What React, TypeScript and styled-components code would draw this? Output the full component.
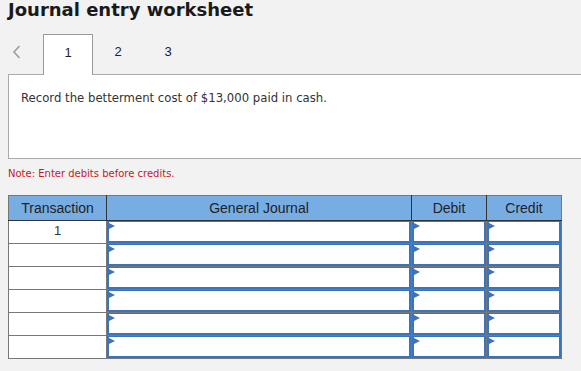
import styled, { createGlobalStyle } from "styled-components";

const GlobalStyle = createGlobalStyle`
  body {
    margin: 0;
    background: #f2f2f2;
    overflow: hidden;
  }
`;

const Page = styled.div`
  padding: 0 0 0 8px;
  font-family: "DejaVu Sans", Verdana, sans-serif;
  color: #222;
`;

const Title = styled.h1`
  margin: 0;
  font-size: 18px;
  line-height: 20px;
  font-weight: bold;
  color: #1a1a1a;
`;

const TabBar = styled.div`
  display: flex;
  align-items: flex-end;
  margin-top: 14px;
  height: 40px;
`;

const Prev = styled.div`
  width: 35px;
  height: 40px;
  display: flex;
  align-items: center;
  padding: 0 0 4px 4px;
  box-sizing: border-box;
  svg {
    display: block;
  }
`;

const Tab = styled.div<{ active?: boolean }>`
  width: 50px;
  height: ${(p) => (p.active ? "41px" : "40px")};
  margin-bottom: ${(p) => (p.active ? "-1px" : "0")};
  box-sizing: border-box;
  display: flex;
  align-items: center;
  justify-content: center;
  padding-bottom: 6px;
  font-family: "Liberation Sans", Arial, sans-serif;
  font-size: 13px;
  color: #222;
  background: ${(p) => (p.active ? "#fff" : "transparent")};
  border: ${(p) => (p.active ? "1px solid #999" : "1px solid transparent")};
  border-bottom: none;
  position: relative;
  z-index: 1;
`;

const Panel = styled.div`
  background: #fff;
  border: 1px solid #aaa;
  margin-right: -20px;
  height: 85px;
  box-sizing: border-box;
  padding: 15px 12px;
  font-size: 11.7px;
  line-height: 16px;
  color: #333;
`;

const Note = styled.div`
  margin-top: 7px;
  font-size: 10px;
  line-height: 15px;
  color: #c8191f;
`;

const Table = styled.table`
  margin-top: 14px;
  border-collapse: collapse;
  table-layout: fixed;
  font-family: "Liberation Sans", Arial, sans-serif;
  font-size: 13px;
`;

const Th = styled.th<{ w: number }>`
  width: ${(p) => p.w}px;
  height: 23px;
  padding: 0 0 1px;
  background: #78ade4;
  color: #222;
  font-weight: normal;
  font-size: 14px;
  text-align: center;
  border: 1px solid #333;
  border-top-color: #777;
  &:first-child {
    border-left-color: #777;
  }
  &:last-child {
    border-right-color: #777;
  }
`;

const Td = styled.td`
  height: 22px;
  padding: 0;
  border: 1px solid #777;
  background: #fff;
  text-align: center;
  color: #333;
  vertical-align: top;
  line-height: 20px;
`;

const InputCell = styled.td`
  height: 22px;
  padding: 0;
  border: 1px solid #777;
  background: #fff;
  vertical-align: top;
`;

const Field = styled.div`
  position: relative;
  height: 22px;
  box-sizing: border-box;
  border: 2px solid #3c73bd;
  border-top-width: 1px;
  background: #fff;
  &::before {
    content: "";
    position: absolute;
    left: 0;
    top: 1px;
    border-left: 6px solid #3c73bd;
    border-top: 3px solid transparent;
    border-bottom: 3px solid transparent;
  }
`;

const rows = ["1", "", "", "", "", ""];

export default function App() {
  return (
    <Page>
      <GlobalStyle />
      <Title>Journal entry worksheet</Title>
      <TabBar>
        <Prev>
          <svg width="9" height="14" viewBox="0 0 9 14">
            <path d="M7.5 1 L2 7 L7.5 13" fill="none" stroke="#9a9a9a" strokeWidth="1.5" />
          </svg>
        </Prev>
        <Tab active>1</Tab>
        <Tab>2</Tab>
        <Tab>3</Tab>
      </TabBar>
      <Panel>Record the betterment cost of $13,000 paid in cash.</Panel>
      <Note>Note: Enter debits before credits.</Note>
      <Table>
        <thead>
          <tr>
            <Th w={97}>Transaction</Th>
            <Th w={304}>General Journal</Th>
            <Th w={74}>Debit</Th>
            <Th w={74}>Credit</Th>
          </tr>
        </thead>
        <tbody>
          {rows.map((r, i) => (
            <tr key={i}>
              <Td>{r}</Td>
              <InputCell><Field /></InputCell>
              <InputCell><Field /></InputCell>
              <InputCell><Field /></InputCell>
            </tr>
          ))}
        </tbody>
      </Table>
    </Page>
  );
}
